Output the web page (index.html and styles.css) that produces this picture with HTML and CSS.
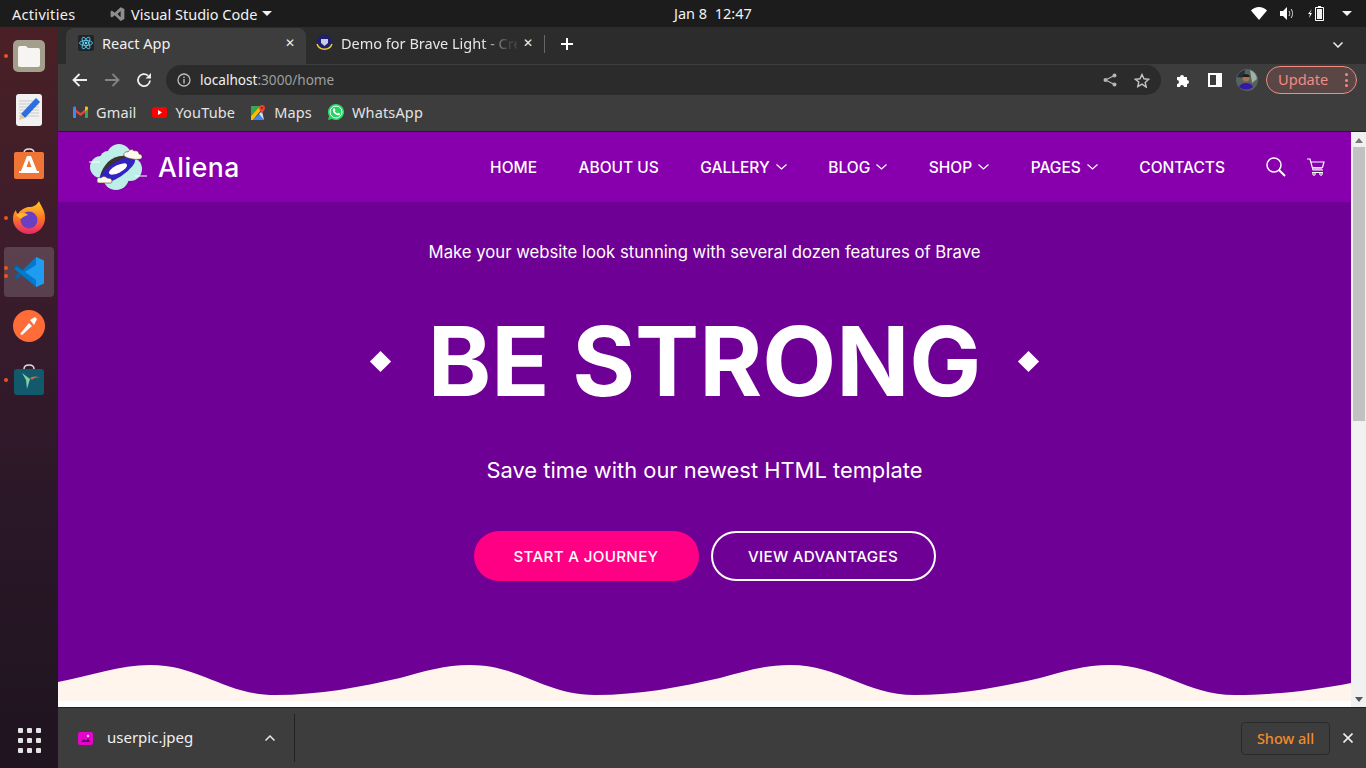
FILE: index.html
```html
<!DOCTYPE html>
<html lang="en">
<head>
    <meta charset="UTF-8">
    <meta name="viewport" content="width=device-width, initial-scale=1.0">
    <title>Aliena - React App</title>
    <link rel="stylesheet" href="styles.css">
</head>
<body>
    <!-- Ubuntu top bar -->
    <div class="topbar">
        <span class="activities">Activities</span>
        <svg class="app-icon" width="15" height="16" viewBox="0 0 24 24"><path fill="#8e8e8e" d="M17 1l6 3v16l-6 3L7.500 14 3 17.500 1 16v-8l2-1.500L7.500 10zM17 7l-5 5 5 5z"/></svg>
        <span class="app-name">Visual Studio Code</span>
        <span class="caret"></span>
        <span class="clock">Jan 8&nbsp;&nbsp;12:47</span>
        <div class="tray">
            <svg width="16" height="13" viewBox="0 0 16 13"><path fill="#fff" d="M0 3.500C2 1.500 5 0 8 0s6 1.500 8 3.500L8 13z"/></svg>
            <svg width="15" height="13" viewBox="0 0 15 13"><path fill="#fff" d="M0 4h3l4-4v13L3 9H0z"/><path fill="none" stroke="#ddd" d="M9 4c1 1.500 1 3.500 0 5M11 2c2 2.500 2 6.500 0 9"/></svg>
            <svg width="16" height="15" viewBox="0 0 16 15"><path fill="#fff" d="M4 3L0 8h2L1 12l3-5H2z"/><path fill="none" stroke="#fff" d="M7.500 1.500h8v13h-8z"/><rect x="10" y="0" width="3" height="1.500" fill="#fff"/><rect x="9" y="3" width="5" height="10" fill="#f0f0f0"/></svg>
            <span class="caret"></span>
        </div>
    </div>

    <div class="desktop">
        <!-- Dock -->
        <div class="dock">
            <div class="dock-item">
                <span class="dot"></span>
                <svg width="32" height="32" viewBox="0 0 32 32"><rect width="32" height="32" rx="5" fill="#a49e8c"/><path fill="#f6f5f2" d="M5 8q0-2 2-2h6l2 2h10q2 0 2 2v15q0 2-2 2H7q-2 0-2-2z"/></svg>
            </div>
            <div class="dock-item">
                <svg width="28" height="32" viewBox="0 0 28 32"><rect width="26" height="32" x="1" rx="3" fill="#f1f1f1"/><path stroke="#c9c9c9" d="M4 7h20M4 10h20M4 13h20M4 16h20M4 19h20M4 22h20"/><path fill="#2a6fe0" d="M21 4l4 4L10 24l-4-4z"/><path fill="#e8c48f" d="M6 20l4 4-6 2z"/></svg>
            </div>
            <div class="dock-item">
                <svg width="32" height="32" viewBox="0 0 32 32"><path fill="none" stroke="#e6e0da" stroke-width="1.500" d="M11 5q0-4 5-4t5 4"/><path fill="#ef7537" d="M3 4h26q2 0 2 2v23q0 2-2 2H3q-2 0-2-2V6q0-2 2-2z"/><path fill="#fff" d="M14 8h4l6 15h2v2H6v-2h2zM16 12l-2.500 7h5z"/></svg>
            </div>
            <div class="dock-item">
                <span class="dot"></span>
                <svg width="32" height="34" viewBox="0 0 32 34"><defs><linearGradient id="fx" x1="0" y1="0" x2="0" y2="1"><stop offset="0" stop-color="#ffcb30"/><stop offset=".5" stop-color="#ff7a1f"/><stop offset="1" stop-color="#e8246f"/></linearGradient></defs><path fill="url(#fx)" d="M26 0c1 4 6 8 6 17 0 9-7 16-16 16S0 26 0 18C0 14 1 11 3 9c0 2 1 3 2 4 2-4 6-6 10-7 3 0 8 0 11-6z"/><circle cx="16" cy="19" r="8.500" fill="#6a3fc4"/><path fill="#ffb52e" d="M3 14c4-3 9-3 12 0-3 1-6 2-7 4z"/></svg>
            </div>
            <div class="dock-item active">
                <span class="dot double"></span>
                <svg width="32" height="32" viewBox="0 0 32 32"><path fill="#0065a9" d="M1 11l3-2 8 6-3 3zM1 21l3 2 8-6-3-3z"/><path fill="#007acc" d="M23 1L9 15l-5-4-3 1.500L23 31l8-3.500V4.500z"/><path fill="#1f9cf0" d="M23 1l8 3.500v23L23 31zM23 9l-11 7 11 8z"/></svg>
            </div>
            <div class="dock-item">
                <svg width="32" height="32" viewBox="0 0 32 32"><circle cx="16" cy="16" r="16" fill="#ff6c37"/><path fill="#fff" d="M7 24l9-11 3 3-10 9zM17 10l5-3 2 2-3 6z"/></svg>
            </div>
            <div class="dock-item">
                <span class="dot"></span>
                <svg width="30" height="32" viewBox="0 0 30 32"><path fill="none" stroke="#ddd" stroke-width="1.500" d="M10 5q0-4 5-4t5 4"/><rect y="5" width="30" height="26" rx="3" fill="#13596c"/><path fill="#7fd0a8" d="M8 9l8 6-3 10-1-9z"/><path fill="#e2603f" d="M16 14c3-2 7-2 10 0-4-1-6 0-8 2z"/></svg>
            </div>
            <div class="dock-apps">
                <span></span><span></span><span></span><span></span><span></span><span></span><span></span><span></span><span></span>
            </div>
        </div>

        <div class="browser">
            <!-- Tabs -->
            <div class="tabstrip">
                <div class="tab tab-active">
                    <svg width="16" height="16" viewBox="0 0 16 16"><rect width="16" height="16" rx="2" fill="#20232a"/><g fill="none" stroke="#61dafb" stroke-width=".8"><ellipse cx="8" cy="8" rx="6.500" ry="2.500"/><ellipse cx="8" cy="8" rx="6.500" ry="2.500" transform="rotate(60 8 8)"/><ellipse cx="8" cy="8" rx="6.500" ry="2.500" transform="rotate(120 8 8)"/></g><circle cx="8" cy="8" r="1.300" fill="#61dafb"/></svg>
                    <span class="tab-title">React App</span>
                    <span class="tab-close">✕</span>
                </div>
                <div class="tab tab-second">
                    <svg width="17" height="17" viewBox="0 0 17 17"><circle cx="8.500" cy="8.500" r="8" fill="#20206a"/><path fill="none" stroke="#f3d21f" stroke-width="1.500" d="M1 10a8 8 0 0 0 15 0"/><path fill="#c9cbe6" d="M5 5h7v4l-3.500 3L5 9z"/></svg>
                    <span class="tab-title tab-fade">Demo for Brave Light - Cre</span>
                    <span class="tab-close">✕</span>
                </div>
                <span class="tab-sep"></span>
                <svg class="tab-new" width="12" height="12" viewBox="0 0 12 12"><path stroke="#fff" stroke-width="2" d="M6 0v12M0 6h12"/></svg>
                <svg class="tab-list" width="10" height="6" viewBox="0 0 10 6"><path fill="none" stroke="#eee" stroke-width="1.500" d="M.5.500L5 5 9.500.500"/></svg>
            </div>

            <!-- Address bar -->
            <div class="toolbar">
                <button class="tool">
                    <svg width="16" height="14" viewBox="0 0 16 14"><path fill="none" stroke="#f0f0f0" stroke-width="1.800" d="M15 7H2M7.500 1L1.500 7l6 6"/></svg>
                </button>
                <button class="tool">
                    <svg width="16" height="14" viewBox="0 0 16 14"><path fill="none" stroke="#848484" stroke-width="1.800" d="M1 7h13M8.500 1l6 6-6 6"/></svg>
                </button>
                <button class="tool">
                    <svg width="16" height="16" viewBox="0 0 16 16"><path fill="none" stroke="#f0f0f0" stroke-width="1.800" d="M14 8.500A6 6 0 1 1 12 3.600"/><path fill="#f0f0f0" d="M15 1v5.500H9.500z"/></svg>
                </button>
                <div class="omnibox">
                    <svg width="14" height="14" viewBox="0 0 14 14"><circle cx="7" cy="7" r="6" fill="none" stroke="#bdbdbd" stroke-width="1.300"/><path stroke="#bdbdbd" stroke-width="1.400" d="M7 6v4.500M7 3.500V5"/></svg>
                    <span class="url"><b>localhost</b>:3000/home</span>
                    <svg class="omni-share" width="14" height="14" viewBox="0 0 14 14"><path fill="none" stroke="#b5b5b5" stroke-width="1.200" d="M11.500 2.500L2.500 7l9 4.500"/><circle cx="11.500" cy="2.500" r="2" fill="#b5b5b5"/><circle cx="2.500" cy="7" r="2" fill="#b5b5b5"/><circle cx="11.500" cy="11.500" r="2" fill="#b5b5b5"/></svg>
                    <svg class="omni-star" width="16" height="15" viewBox="0 0 16 15"><path fill="none" stroke="#c4c4c4" stroke-width="1.400" d="M8 1.500l2 4.300 4.700.5-3.500 3.200 1 4.600L8 11.200l-4.200 2.400 1-4.600L1.300 6.300 6 5.800z"/></svg>
                </div>
                <button class="tool">
                    <svg width="15" height="15" viewBox="0 0 15 15"><path fill="#fff" d="M1 4h3a2 2 0 1 1 4 0h3v3a2 2 0 1 1 0 4v3H8a2 2 0 1 0-4 0H1v-3a2 2 0 1 0 0-4z"/></svg>
                </button>
                <button class="tool">
                    <svg width="14" height="14" viewBox="0 0 14 14"><path fill="#fff" d="M0 0h14v14H0zM2 2v10h6V2z"/></svg>
                </button>
                <button class="tool">
                    <svg width="22" height="22" viewBox="0 0 22 22"><circle cx="11" cy="11" r="11" fill="#56625c"/><path fill="#9fb0a8" d="M14 1a11 11 0 0 1 7 9l-5 4z"/><path fill="#27303a" d="M1 8a11 11 0 0 1 8-7l-1 8z"/><path fill="#351aa8" d="M3 18q2-4 7-4t7 4a11 11 0 0 1-14 0z"/><circle cx="10" cy="9" r="3.500" fill="#a8754f"/><path fill="#1c1c1c" d="M6 7q4-4 8 0l-1 1H7z"/></svg>
                </button>
                <div class="update">
                    <span class="update-text">Update</span>
                    <span class="update-dots"><i></i><i></i><i></i></span>
                </div>
            </div>

            <!-- Bookmarks -->
            <div class="bookmarks">
                <div class="bookmark">
                    <svg width="15" height="12" viewBox="0 0 15 12"><path fill="#ea4335" d="M1 2l6.500 5L14 2v3L7.500 10 1 5z"/><path fill="#4285f4" d="M0 2q0-2 2-1.500L3 1v11H1q-1 0-1-1z"/><path fill="#34a853" d="M15 2q0-2-2-1.500L12 1v11h2q1 0 1-1z"/><path fill="#fbbc04" d="M12 1l1-.5q2-.5 2 1.500v1l-3 2.500z"/></svg>
                    <span>Gmail</span>
                </div>
                <div class="bookmark">
                    <svg width="15" height="11" viewBox="0 0 15 11"><rect width="15" height="11" rx="3" fill="#f00"/><path fill="#fff" d="M6 3l4 2.500L6 8z"/></svg>
                    <span>YouTube</span>
                </div>
                <div class="bookmark">
                    <svg width="15" height="15" viewBox="0 0 15 15"><path fill="#34a853" d="M0 1h9L0 11z"/><path fill="#fbbc04" d="M0 11L9 1l2 3L2 15H0z"/><path fill="#4285f4" d="M2 15l6-6 5 6z"/><path fill="#d7e3f5" d="M8 9l3-3 2 9z"/><path fill="#ea4335" d="M11 0a3 3 0 0 1 3 3c0 2-2 3-3 6-1-3-3-4-3-6a3 3 0 0 1 3-3z"/><circle cx="11" cy="3" r="1" fill="#8c1d18"/></svg>
                    <span>Maps</span>
                </div>
                <div class="bookmark">
                    <svg width="16" height="16" viewBox="0 0 16 16"><path fill="#25d366" d="M8 0a8 8 0 1 1-4 14.900L0 16l1.100-3.900A8 8 0 0 1 8 0z"/><circle cx="8" cy="8" r="6" fill="none" stroke="#fff"/><path fill="#fff" d="M5.500 4.500l1-.3 1 2-.7 1c.5 1 1.300 1.800 2.500 2.300l1-.8 1.900 1-.3 1c-1 1-3 .6-4.800-.7C5 8.500 4 6 5.500 4.500z"/></svg>
                    <span>WhatsApp</span>
                </div>
            </div>

            <!-- Page -->
            <div class="viewport">
                <div class="site">
                    <header class="site-header">
                        <a class="logo">
                            <svg width="60" height="48" viewBox="0 0 60 48">
                                <g fill="#bdeee8">
                                    <circle cx="31" cy="13" r="12"/>
                                    <circle cx="13" cy="24" r="11"/>
                                    <circle cx="28" cy="34" r="13"/>
                                    <circle cx="42" cy="26" r="12"/>
                                    <circle cx="20" cy="16" r="8"/>
                                </g>
                                <path fill="#3c3434" d="M12 33C15 22 24 11 39 13l3 4z"/>
                                <ellipse cx="29" cy="27" rx="21" ry="7.500" transform="rotate(-33 29 27)" fill="#3322c4"/>
                                <ellipse cx="30" cy="26" rx="10" ry="3.800" transform="rotate(-27 30 26)" fill="#fff"/>
                                <path fill="#fff8ec" stroke="#4a3a30" stroke-width=".6" d="M36 13c-1-3 2-5 4-4 1-3 5-3 6-1 3-1 5 1 5 3 3 0 4 3 2 5-5 1-13 0-17-3z"/>
                                <path fill="#fff8ec" stroke="#4a3a30" stroke-width=".6" d="M9 37c0-2 2-3 4-2 1-2 5-2 6 0 3 0 5 1 5 3s-1 2-2 2H11c-2 0-2-2-2-3z"/>
                                <path stroke="#fff" d="M1 19h11M47 33h12"/>
                            </svg>
                            <span class="logo-name">Aliena</span>
                        </a>
                        <nav class="nav">
                            <a>HOME</a>
                            <a>ABOUT US</a>
                            <a>GALLERY <svg class="chev" width="11" height="6" viewBox="0 0 11 6"><path d="M.5.500L5.500 5l5-4.500"/></svg></a>
                            <a>BLOG <svg class="chev" width="11" height="6" viewBox="0 0 11 6"><path d="M.5.500L5.500 5l5-4.500"/></svg></a>
                            <a>SHOP <svg class="chev" width="11" height="6" viewBox="0 0 11 6"><path d="M.5.500L5.500 5l5-4.500"/></svg></a>
                            <a>PAGES <svg class="chev" width="11" height="6" viewBox="0 0 11 6"><path d="M.5.500L5.500 5l5-4.500"/></svg></a>
                            <a>CONTACTS</a>
                        </nav>
                        <div class="header-icons">
                            <svg width="20" height="20" viewBox="0 0 20 20"><circle cx="8" cy="8" r="7" fill="none" stroke="#fff" stroke-width="1.500"/><path stroke="#fff" stroke-width="2" d="M13 13l6 6"/></svg>
                            <svg width="18" height="18" viewBox="0 0 18 18"><path fill="none" stroke="#fff" stroke-width="1.200" d="M0 1h3l3 11h10M4 4h13l-1.500 5.500H5.500M5 14.500h11"/><path fill="#d9b3e6" d="M5.500 9.500h10l-1 2.500H6z"/><circle cx="7" cy="16" r="1.300" fill="none" stroke="#fff"/><circle cx="14" cy="16" r="1.300" fill="none" stroke="#fff"/></svg>
                        </div>
                    </header>
                    <section class="hero">
                        <p class="hero-tag">Make your website look stunning with several dozen features of Brave</p>
                        <div class="hero-title">
                            <span class="diamond"></span>
                            <h1>BE STRONG</h1>
                            <span class="diamond"></span>
                        </div>
                        <p class="hero-sub">Save time with our newest HTML template</p>
                        <div class="hero-btns">
                            <a class="btn btn-pink">START A JOURNEY</a>
                            <a class="btn btn-line">VIEW ADVANTAGES</a>
                        </div>
                        <svg class="wave" width="1293" height="43" viewBox="58 664 1293 43" preserveAspectRatio="none">
                            <path fill="#fff5ec" d="M58 682 C90 676 120 665 150 665 C200 665 225 695 275 695 C320 695 360 687 400 678 C425 671 445 665 470 665 C520 665 545 695 595 695 C640 695 680 687 720 678 C745 671 765 665 790 665 C840 665 865 695 915 695 C960 695 1000 687 1040 678 C1065 671 1085 665 1110 665 C1160 665 1185 695 1235 695 C1280 695 1320 689 1351 683 L1351 701 L58 701 Z"/>
                            <rect x="58" y="701" width="1293" height="6" fill="#fff"/>
                        </svg>
                    </section>
                </div>
                <div class="scrollbar">
                    <span class="arrow-up"></span>
                    <span class="thumb"></span>
                    <span class="arrow-down"></span>
                </div>
            </div>

            <!-- Downloads -->
            <div class="downloads">
                <div class="dl-item">
                    <svg width="15" height="13" viewBox="0 0 15 13"><rect width="15" height="13" rx="2" fill="#e305c9"/><path fill="#5a0850" d="M3 10l3-3 2 2 2-3 2 4z"/><circle cx="10" cy="4" r="1.200" fill="#f8c8f0"/></svg>
                    <span class="dl-name">userpic.jpeg</span>
                    <svg class="dl-up" width="10" height="6" viewBox="0 0 10 6"><path fill="none" stroke="#e8e8e8" stroke-width="1.500" d="M.5 5.500L5 1l4.500 4.500"/></svg>
                </div>
                <button class="show-all">Show all</button>
                <svg class="dl-close" width="10" height="10" viewBox="0 0 10 10"><path stroke="#eee" stroke-width="1.600" d="M.5.500l9 9M9.500.500l-9 9"/></svg>
            </div>
        </div>
    </div>
</body>
</html>
```

FILE: styles.css
```css
* {
    box-sizing: border-box;
}
body {
    margin: 0;
    width: 1366px;
    height: 768px;
    overflow: hidden;
    font-family: "Noto Sans", sans-serif;
    background-color: #000;
}
svg {
    display: block;
    flex-shrink: 0;
}

/* Top bar */
.topbar {
    height: 27px;
    display: flex;
    align-items: center;
    padding-left: 12px;
    background-color: #1c1c1c;
    color: #f2f2f2;
    font-size: 14.500px;
}
.activities {
    width: 98px;
    letter-spacing: 0.300px;
}
.app-name {
    margin-left: 6px;
}
.caret {
    width: 0;
    height: 0;
    margin-left: 5px;
    border-left: 5px solid transparent;
    border-right: 5px solid transparent;
    border-top: 5px solid #f2f2f2;
}
.clock {
    position: absolute;
    left: 674px;
    top: 3px;
}
.tray {
    margin-left: auto;
    display: flex;
    align-items: center;
    gap: 13px;
    padding-right: 14px;
}

/* Dock */
.desktop {
    display: flex;
    height: 741px;
}
.dock {
    width: 58px;
    padding-top: 2px;
    display: flex;
    flex-direction: column;
    background: linear-gradient(180deg, #4a2025 0%, #3a1c2c 35%, #2a1728 65%, #1f141f 100%);
}
.dock-item {
    position: relative;
    height: 54px;
    display: flex;
    align-items: center;
    justify-content: center;
}
.dock-item.active::before {
    content: "";
    position: absolute;
    left: 4px;
    top: 2px;
    width: 50px;
    height: 50px;
    border-radius: 4px;
    background-color: rgba(255, 255, 255, 0.16);
}
.dock-item svg {
    position: relative;
}
.dot {
    position: absolute;
    left: 4px;
    top: 25px;
    width: 4px;
    height: 4px;
    border-radius: 50%;
    background-color: #e95420;
}
.dot.double {
    top: 21px;
    box-shadow: 0 8px 0 #e95420;
}
.dock-apps {
    margin-top: auto;
    margin-bottom: 15px;
    margin-left: 18px;
    width: 22px;
    display: grid;
    grid-template-columns: repeat(3, 4px);
    gap: 5px;
}
.dock-apps span {
    width: 5px;
    height: 5px;
    border-radius: 1px;
    background-color: #e4e4e4;
}

/* Browser */
.browser {
    flex: 1;
    min-width: 0;
    display: flex;
    flex-direction: column;
}
.tabstrip {
    height: 37px;
    flex-shrink: 0;
    padding: 1px 0 0 8px;
    display: flex;
    align-items: center;
    background-color: #2c2c2c;
}
.tab {
    width: 240px;
    height: 36px;
    padding: 0 11px 7px 12px;
    display: flex;
    align-items: center;
    color: #e6e6e6;
    font-size: 14.500px;
}
.tab-active {
    background-color: #3d3d3d;
    border-radius: 8px 8px 0 0;
    color: #f0f0f0;
}
.tab-second {
    width: 238px;
    padding-left: 10px;
}
.tab-title {
    flex: 1;
    min-width: 0;
    margin-left: 8px;
    white-space: nowrap;
}
.tab-fade {
    -webkit-mask-image: linear-gradient(90deg, #000 80%, rgba(0, 0, 0, 0.15) 95%);
    mask-image: linear-gradient(90deg, #000 80%, rgba(0, 0, 0, 0.15) 95%);
}
.tab-close {
    margin-left: 6px;
    font-size: 12px;
    color: #eee;
}
.tab-sep {
    width: 1px;
    height: 18px;
    margin-bottom: 4px;
    background-color: #666;
}
.tab-new {
    margin: 0 0 4px 16px;
}
.tab-list {
    margin: 0 23px 2px auto;
}
.toolbar {
    height: 32px;
    flex-shrink: 0;
    padding-left: 6px;
    display: flex;
    align-items: center;
    background-color: #3d3d3d;
}
.tool {
    width: 32px;
    height: 32px;
    padding: 0;
    border: none;
    background: none;
    display: flex;
    align-items: center;
    justify-content: center;
}
.omnibox {
    flex: 1;
    height: 30px;
    margin: 0 6px;
    padding: 0 11px 0 11px;
    display: flex;
    align-items: center;
    border-radius: 15px;
    background-color: #2b2b2b;
}
.url {
    margin: 0 0 2px 9px;
    font-size: 13.600px;
    color: #9e9e9e;
}
.url b {
    font-weight: 400;
    color: #f0f0f0;
}
.omni-share {
    margin-left: auto;
}
.omni-star {
    margin-left: 17px;
}
.update {
    width: 91px;
    height: 28px;
    margin: 0 9px 0 3px;
    padding: 0 8px 0 11px;
    display: flex;
    align-items: center;
    justify-content: space-between;
    border: 1px solid #f28b82;
    border-radius: 14px;
    background-color: #5b4646;
    color: #f28b82;
    font-size: 14.600px;
}
.update-text {
    margin-bottom: 2px;
}
.update-dots {
    display: flex;
    flex-direction: column;
    gap: 2.500px;
}
.update-dots i {
    width: 3px;
    height: 3px;
    border-radius: 50%;
    background-color: #f28b82;
}
.bookmarks {
    height: 36px;
    flex-shrink: 0;
    padding: 0 0 3px 15px;
    display: flex;
    align-items: center;
    gap: 16px;
    border-bottom: 1px solid #1f1f1f;
    background-color: #3d3d3d;
    color: #e3e3e3;
    font-size: 14.500px;
    letter-spacing: 0.150px;
}
.bookmark {
    display: flex;
    align-items: center;
    gap: 8px;
}

/* Page */
.viewport {
    height: 575px;
    flex-shrink: 0;
    display: flex;
}
.site {
    flex: 1;
    min-width: 0;
    display: flex;
    flex-direction: column;
    font-family: Inter, sans-serif;
    color: #fff;
}
.site-header {
    height: 70px;
    flex-shrink: 0;
    padding: 0 26px 0 30px;
    display: flex;
    align-items: center;
    background-color: #8800ad;
}
.logo {
    display: flex;
    align-items: center;
    gap: 10px;
}
.logo-name {
    font-size: 26.500px;
    font-weight: 500;
    letter-spacing: 0.500px;
}
.nav {
    margin-left: auto;
    display: flex;
    align-items: center;
    gap: 41.500px;
    font-size: 15.500px;
    font-weight: 500;
}
.nav a {
    display: flex;
    align-items: center;
    gap: 6px;
}
.chev {
    fill: none;
    stroke: #fff;
    stroke-width: 1.200;
}
.header-icons {
    margin-left: 41px;
    display: flex;
    align-items: center;
    gap: 21px;
}
.hero {
    flex: 1;
    display: flex;
    flex-direction: column;
    align-items: center;
    background-color: #6f0095;
}
.hero-tag {
    margin: 38px 0 0;
    font-size: 16.700px;
    line-height: 24px;
}
.hero-title {
    margin-top: 39px;
    display: flex;
    align-items: center;
    gap: 40px;
}
.hero-title h1 {
    margin: 0;
    font-size: 96px;
    font-weight: 700;
    line-height: 116px;
}
.diamond {
    width: 15px;
    height: 15px;
    background-color: #fff;
    transform: rotate(45deg);
}
.hero-sub {
    margin: 36px 0 0;
    font-size: 21.900px;
    line-height: 30px;
}
.hero-btns {
    margin-top: 46px;
    display: flex;
    gap: 12px;
}
.btn {
    width: 225px;
    height: 50px;
    display: flex;
    align-items: center;
    justify-content: center;
    border-radius: 25px;
    font-size: 15.200px;
    font-weight: 500;
    letter-spacing: 0.300px;
}
.btn-pink {
    background-color: #ff0084;
}
.btn-line {
    border: 2px solid #fff;
}
.wave {
    margin-top: auto;
}

/* Scrollbar */
.scrollbar {
    width: 15px;
    flex-shrink: 0;
    display: flex;
    flex-direction: column;
    align-items: center;
    background-color: #f1f1f1;
}
.thumb {
    width: 12px;
    height: 274px;
    margin-top: 4px;
    background-color: #c1c1c1;
}
.arrow-up, .arrow-down {
    width: 0;
    height: 0;
    border-left: 4px solid transparent;
    border-right: 4px solid transparent;
}
.arrow-up {
    margin-top: 6px;
    border-bottom: 5px solid #777;
}
.arrow-down {
    margin-top: auto;
    margin-bottom: 5px;
    border-top: 5px solid #555;
}

/* Download bar */
.downloads {
    flex: 1;
    display: flex;
    align-items: center;
    border-top: 1px solid #222;
    background-color: #3d3d3d;
}
.dl-item {
    width: 237px;
    height: 48px;
    padding: 0 19px 0 20px;
    display: flex;
    align-items: center;
    border-right: 1px solid #222;
    color: #f0f0f0;
    font-size: 15px;
}
.dl-name {
    margin: 0 0 2px 14px;
}
.dl-up {
    margin-left: auto;
}
.show-all {
    width: 89px;
    height: 33px;
    margin-left: auto;
    border: 1px solid #2a2a2a;
    border-radius: 4px;
    background: none;
    color: #f28c28;
    font-family: "Noto Sans", sans-serif;
    font-size: 14.500px;
    font-weight: 500;
}
.dl-close {
    margin: 0 13px;
}
```
